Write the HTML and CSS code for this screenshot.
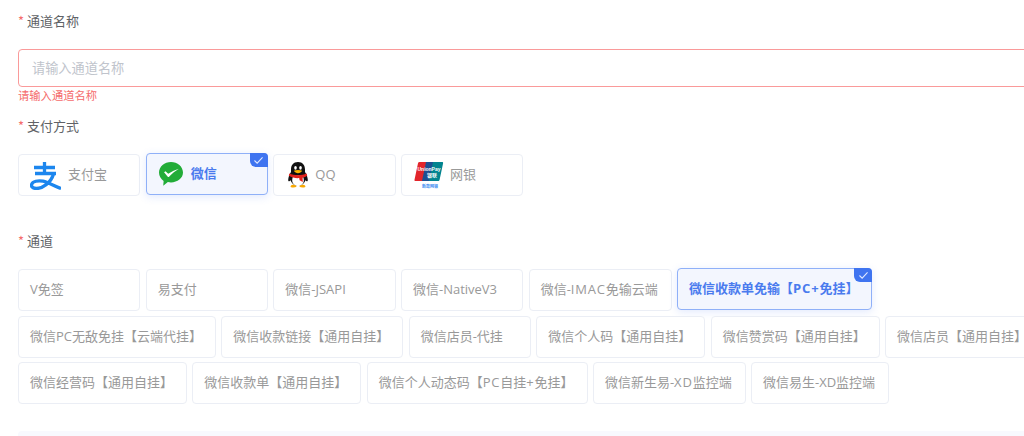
FILE: index.html
```html
<!DOCTYPE html>
<html lang="zh-CN">
<head>
<meta charset="utf-8">
<title>通道</title>
<link rel="stylesheet" href="styles.css">
</head>
<body>
<form class="form">
  <div class="field field-name">
    <label class="label"><span class="star">*</span>通道名称</label>
    <input class="input" type="text" placeholder="请输入通道名称">
    <div class="error">请输入通道名称</div>
  </div>
  <div class="field field-pay">
    <label class="label"><span class="star">*</span>支付方式</label>
    <div class="options">
      <div class="card">
        <svg class="icon icon-ali" viewBox="0 0 31 29" fill="none" stroke="#1c86ee" stroke-width="3.300"><path d="M4 6.500H25M14.500 1V13M5 12.500H26"/><path d="M23.500 13C21 22 12 27.500 6.500 27.500 2.800 27.500 1 25.800 1.700 23.300 2.600 20.300 8 19.200 13 20.200 19 21.500 25 25.500 31 27.500"/></svg>
        <span>支付宝</span>
      </div>
      <div class="card active">
        <svg class="icon icon-wx" viewBox="0 0 26 26"><path fill="#22ac38" d="M13 0C6 0 0 5 0 11.500c0 3.700 2 6.900 5 9l-.4 5.300 5-4c1.100.3 2.200.4 3.400.4 7 0 13-4.700 13-10.700C26 5 20 0 13 0z"/><path fill="#fff" d="M5.500 11.200l1.500-1.100 3 2.500c3.800-2.400 7.800-4.300 11.500-5.400-3.500 2.200-7.500 5.100-10.600 8.800-.4.400-1 .4-1.400 0L5.500 11.200z"/></svg>
        <span>微信</span>
        <i class="tick"><svg viewBox="0 0 12 10"><path d="M1.500 5l3 3 6-6.500" fill="none" stroke="#dfe8ff" stroke-width="1.200"/></svg></i>
      </div>
      <div class="card">
        <svg class="icon icon-qq" viewBox="0 0 24 28">
          <path fill="#111" d="M12 1C7.300 1 5 4.400 5 8.500v2.400C3.600 13.300 2.200 16 2.200 19c0 1.200.6 1.700 1.500 1.100l.9-.8C5.700 22.400 8.500 25 12 25s6.300-2.600 7.400-5.700l.9.800c.9.600 1.500.1 1.500-1.100 0-3-1.400-5.700-2.800-8.100V8.500C19 4.400 16.700 1 12 1z"/>
          <path fill="#fff" d="M7.300 14.500c-.8 2-1.100 3.700-1.100 5 0 3 2.700 5.500 5.800 5.500s5.800-2.500 5.800-5.500c0-1.300-.3-3-1.100-5z"/>
          <ellipse cx="9.500" cy="6.800" rx="1.300" ry="1.900" fill="#fff"/><ellipse cx="14.500" cy="6.800" rx="1.300" ry="1.900" fill="#fff"/>
          <path fill="#f8b500" d="M7.800 9.800c2.600-1.200 5.800-1.200 8.400 0-.9 1.600-2.500 2.500-4.200 2.500s-3.300-.9-4.200-2.500z"/>
          <path fill="#e3231b" d="M3.300 12.500c5.500 2.300 11.900 2.300 17.400 0l.5 2.300c-1.400.9-3 1.500-4.600 1.900l.2 4.200-3.200-1.700-.4-2.100c-3 .3-7.400-.3-10.400-2.300z"/>
          <path fill="#f8a800" d="M6 24c1.900-.6 3.600.1 4.600 1.700-1.500.9-4.300 1-5.900.2-.4-.6.300-1.600 1.300-1.900zM18 24c-1.900-.6-3.600.1-4.600 1.700 1.500.9 4.300 1 5.900.2.400-.6-.3-1.600-1.300-1.900z"/>
        </svg>
        <span>QQ</span>
      </div>
      <div class="card">
        <svg class="icon icon-up" viewBox="0 0 30 28">
          <path fill="#e2252b" d="M5.500 1h8.500L10 20H1.500c-.8 0-1.200-.5-1-1.300L4 2.200C4.200 1.400 4.700 1 5.500 1z"/>
          <path fill="#1d4f91" d="M12 1h9l-4 19H8z"/>
          <path fill="#01848f" d="M19 1h9c.8 0 1.300.5 1.100 1.300l-3.500 16.500c-.2.800-.7 1.200-1.500 1.200H15z"/>
          <text x="3.500" y="9.500" class="up-en" textLength="23" lengthAdjust="spacingAndGlyphs">UnionPay</text>
          <text x="13" y="16" class="up-cn">银联</text>
          <text x="8" y="26.500" class="up-sub">新款网银</text>
        </svg>
        <span>网银</span>
      </div>
    </div>
  </div>
  <div class="field field-channel">
    <label class="label"><span class="star">*</span>通道</label>
    <div class="options channels">
      <div class="card">V免签</div>
      <div class="card">易支付</div>
      <div class="card">微信-JSAPI</div>
      <div class="card">微信-NativeV3</div>
      <div class="card"><span>微信-<span class="en">IMAC</span>免输云端</span></div>
      <div class="card active"><span>微信收款单免输【<span class="en">PC+</span>免挂】</span><i class="tick"><svg viewBox="0 0 12 10"><path d="M1.500 5l3 3 6-6.500" fill="none" stroke="#dfe8ff" stroke-width="1.200"/></svg></i></div>
      <div class="card">微信PC无敌免挂【云端代挂】</div>
      <div class="card">微信收款链接【通用自挂】</div>
      <div class="card">微信店员-代挂</div>
      <div class="card">微信个人码【通用自挂】</div>
      <div class="card">微信赞赏码【通用自挂】</div>
      <div class="card">微信店员【通用自挂】</div>
      <div class="card">微信经营码【通用自挂】</div>
      <div class="card">微信收款单【通用自挂】</div>
      <div class="card"><span>微信个人动态码【<span class="en">PC</span>自挂<span class="en">+</span>免挂】</span></div>
      <div class="card"><span>微信新生易-<span class="en">XD</span>监控端</span></div>
      <div class="card">微信易生-XD监控端</div>
    </div>
  </div>
  <div class="strip"></div>
</form>
</body>
</html>
```
FILE: styles.css
```css
html, body { margin: 0; padding: 0; height: 436px; overflow: hidden; background: #fff; }
body { font-family: "Open Sans", "Noto Sans CJK SC", sans-serif; font-size: 13px; color: #606266; }
.form { width: 1050px; height: 436px; overflow: hidden; padding: 0 0 0 18px; }
.field { display: flex; flex-direction: column; }
.label { font-size: 13px; line-height: 20px; color: #606266; display: block; }
.star { font-family: "Noto Sans CJK SC", sans-serif; color: #f56c6c; margin-right: 3px; }
.field-name { padding-top: 11px; }
.input { margin-top: 18px; height: 38px; box-sizing: border-box; width: 100%; border: 1px solid #fa9a9a; border-radius: 4px; padding: 0 13px; font: inherit; font-size: 13.200px; outline: none; }
.input::placeholder { color: #c0c4cc; }
.error { color: #f56c6c; font-size: 11.300px; line-height: 18px; }
.field-pay { margin-top: 11px; }
.options { display: flex; flex-wrap: wrap; margin-top: 18px; gap: 4.500px 5.330px; }
.field-channel { margin-top: 35px; }
.field-channel .options { margin-top: 18px; }
.card { position: relative; box-sizing: border-box; height: 42px; min-width: 122.330px; padding: 0 12px 3px; border: 1px solid #ebeef5; border-radius: 4px; display: flex; align-items: center; color: #999; font-size: 13px; background: #fff; white-space: nowrap; }
.channels .card { padding: 0 13px 3px 11px; }
.en { letter-spacing: .8px; }
.card.active { border-color: #8fb0f8; background: #f3f6fe; color: #4a7bee; font-weight: 700; box-shadow: 0 2px 8px rgba(60, 110, 240, .15); transform: translateY(-1px); }
.icon { flex: none; margin-bottom: -3px; }
.icon-ali { width: 31px; height: 29px; margin-left: -1px; margin-right: 7px; }
.icon-wx { width: 24px; height: 24px; margin-right: 8px; }
.icon-qq { width: 24px; height: 28px; margin-right: 5px; }
.icon-up { width: 30px; height: 28px; margin-right: 6px; }
.up-en { font: 700 4.500px "Liberation Sans", sans-serif; fill: #fff; }
.up-cn { font: 700 5px "Noto Sans CJK SC", sans-serif; fill: #fff; }
.up-sub { font: 700 4px "Noto Sans CJK SC", sans-serif; fill: #3d8df0; }
.tick { position: absolute; top: -1px; right: -1px; width: 18px; height: 14px; background: #3f74f0; border-radius: 0 4px 0 6px; display: flex; align-items: center; justify-content: center; }
.tick svg { width: 11px; height: 9px; }
.strip { margin-top: 27px; height: 10px; background: #f8f9fe; border-radius: 4px; }
```
